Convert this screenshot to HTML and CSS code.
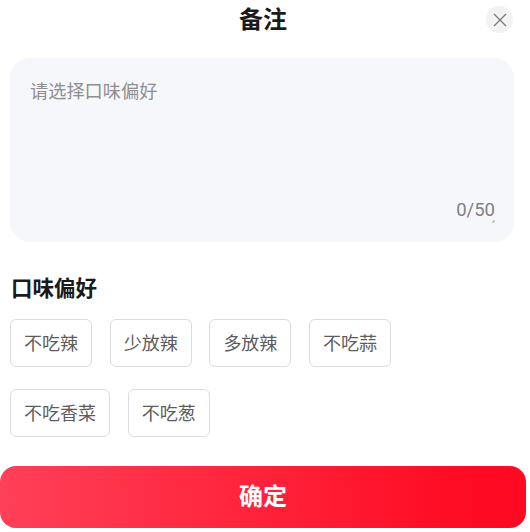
FILE: index.html
```html
<!DOCTYPE html>
<html lang="zh-CN">
<head>
<meta charset="UTF-8" />
<meta name="viewport" content="width=device-width, initial-scale=1" />
<title>备注</title>
<link rel="stylesheet" href="styles.css">
</head>
<body>
  <div class="sheet">
    <div class="header">
      <div class="title">备注</div>
      <button class="close" type="button" aria-label="关闭">
        <svg width="14" height="14" viewBox="0 0 14 14">
          <path d="M1 1L13 13M13 1L1 13" stroke="#777" stroke-width="1.2" fill="none" />
        </svg>
      </button>
    </div>

    <div class="note">
      <textarea class="note-input" placeholder="请选择口味偏好"></textarea>
      <div class="count">0/50</div>
      <span class="grip"></span>
    </div>

    <div class="section-title">口味偏好</div>
    <div class="tags">
      <div class="tag">不吃辣</div>
      <div class="tag">少放辣</div>
      <div class="tag">多放辣</div>
      <div class="tag">不吃蒜</div>
      <div class="tag">不吃香菜</div>
      <div class="tag">不吃葱</div>
    </div>

    <button class="confirm" type="button">确定</button>
  </div>
</body>
</html>
```

FILE: styles.css
```css
* {
  box-sizing: border-box;
}

body {
  margin: 0;
  background: #fff;
  font-family: "Noto Sans CJK SC", "Liberation Sans", sans-serif;
}

.sheet {
  width: 526px;
  height: 532px;
  display: flex;
  flex-direction: column;
}

.header {
  height: 58px;
  padding: 6px 13px 0 0;
  display: flex;
  justify-content: flex-end;
  position: relative;
}

.title {
  position: absolute;
  left: 0;
  right: 0;
  top: 0;
  text-align: center;
  font-size: 24px;
  line-height: 36px;
  font-weight: 700;
  color: #1a1a1a;
}

.close {
  width: 27px;
  height: 27px;
  padding: 0;
  border: none;
  border-radius: 50%;
  background: #f3f3f3;
  display: flex;
  align-items: center;
  justify-content: center;
}

.note {
  position: relative;
  width: 504px;
  height: 184px;
  margin-left: 10px;
  padding: 19px 20px;
  border-radius: 20px;
  background: #f6f7fb;
}

.note-input {
  display: block;
  width: 100%;
  height: 100px;
  padding: 0;
  border: none;
  outline: none;
  resize: none;
  background: transparent;
  font-family: inherit;
  font-size: 18.2px;
  line-height: 26px;
  color: #333;
}

.note-input::placeholder {
  color: #8f8f8f;
}

.count {
  position: absolute;
  right: 19px;
  top: 140px;
  font-family: Roboto, "Liberation Sans", sans-serif;
  font-size: 18.5px;
  line-height: 24px;
  color: #808080;
}

.grip {
  position: absolute;
  left: 482px;
  top: 163px;
  width: 3px;
  height: 1px;
  background: #999;
  transform: rotate(-50deg);
}

.section-title {
  margin: 30px 0 0 11px;
  font-size: 21.5px;
  line-height: 30px;
  font-weight: 700;
  color: #1a1a1a;
}

.tags {
  margin: 17px 0 0 10px;
  width: 400px;
  display: flex;
  flex-wrap: wrap;
  gap: 22px 17.7px;
}

.tag {
  height: 48px;
  padding: 0 13px;
  border: 1px solid #dcdcdc;
  border-radius: 6px;
  font-size: 18px;
  line-height: 44px;
  color: #5c5c5c;
}

.confirm {
  margin-top: 29px;
  width: 526px;
  height: 62px;
  padding: 0 0 6px;
  border: none;
  border-radius: 16px;
  background: linear-gradient(90deg, #ff4058, #ff0a22 90%);
  color: #fff;
  font-family: inherit;
  font-size: 24px;
  font-weight: 700;
}
```
